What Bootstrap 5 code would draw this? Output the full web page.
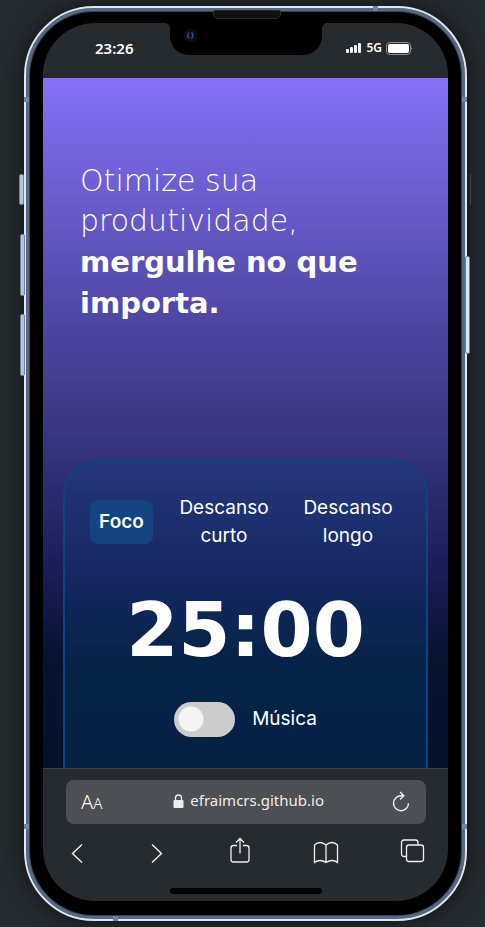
<!DOCTYPE html>
<html lang="pt-BR">
<head>
<meta charset="utf-8">
<meta name="viewport" content="width=device-width, initial-scale=1">
<title>Fokus</title>
<link href="https://cdn.jsdelivr.net/npm/bootstrap@5.3.0/dist/css/bootstrap.min.css" rel="stylesheet">
<style>
body { background: #262b2f; padding: 6px 18px 6px 24px; font-family: Inter, "Noto Sans", sans-serif; color: #fff; }
button { color: inherit; }
svg { display: block; }
.phone { min-height: calc(100vh - 12px); padding: 15px 17px 18px; background: #000; border: 2px solid #dfe6f5; border-radius: 70px;
  box-shadow: inset 0 0 0 3px #566982, inset 0 0 0 4px #33404f, 0 0 22px rgba(0,0,0,.6); }
.side-key { position: absolute; width: 5px; background: #b5c4d9; border: 1px solid #71819a; border-radius: 2px; }
.key-mute { left: -7px; top: 166px; height: 31px; }
.key-up { left: -6px; top: 226px; height: 62px; }
.key-down { left: -6px; top: 306px; height: 62px; }
.key-power { right: -5px; top: 248px; height: 98px; background: #d5e6f7; }
.key-shade { right: -6px; top: 166px; height: 31px; width: 1px; background: #3c444c; border: 0; }
.antenna { position: absolute; width: 5px; height: 5px; background: #7484a3; }
.an-lt { left: -2px; top: 89px; } .an-lb { left: -2px; bottom: 90px; }
.an-rt { right: -2px; top: 89px; } .an-rb { right: -2px; bottom: 90px; }
.an-t { right: 87px; top: -2px; } .an-b { left: 87px; bottom: -2px; }
.speaker { position: absolute; top: 2px; left: 50%; width: 68px; margin-left: -33px; height: 9px; background: #111; border: 1px solid #292929; border-radius: 2px 2px 5px 5px; }
.screen { border-radius: 52px; background: #262b2f; }
.notch { position: absolute; top: 0; left: 50%; width: 152px; margin-left: -76px; height: 32px; background: #000; border-radius: 0 0 19px 19px; }
.notch::before, .notch::after { content: ""; position: absolute; top: 0; width: 4px; height: 4px; }
.notch::before { left: -4px; background: radial-gradient(circle at 0 100%, transparent 3px, #000 4px); }
.notch::after { right: -4px; background: radial-gradient(circle at 100% 100%, transparent 3px, #000 4px); }
.lens { position: absolute; left: 13px; top: 5px; }
.status { height: 55px; padding: 0 35px 5px 52px; font-family: "Noto Sans", sans-serif; }
.clock { font-size: 15px; font-weight: 600; }
.net { font-size: 12px; font-weight: 600; line-height: 16px; }
.site { padding: 83px 20px 0; background: linear-gradient(#8771f8 0, #5048a6 34%, #37347f 53%, #191b53 73%, #04142f 85%, #03132c 100%); }
.slogan { font-family: "DejaVu Sans", sans-serif; font-size: 29px; line-height: 41px; margin: 0 17px 136px; }
.slogan span, .slogan strong { display: block; }
.slogan-thin { font-size: 30px; line-height: 40px; font-weight: 200; padding-bottom: 1px; }
.timer-card { padding: 32px 29px 30px 25px; border: 2px solid #13427c; border-bottom: 0; border-radius: 34px 34px 0 0; background: rgba(11,68,128,.3); }
.mode { background: none; border: 0; border-radius: 8px; font-size: 19px; line-height: 28px; padding: 0; width: 98px; }
.mode-on { width: 63px; height: 44px; background: #144480; font-weight: 600; }
.modes { gap: 22px; }
.countdown { font-family: "DejaVu Sans", sans-serif; font-weight: 700; font-size: 75px; line-height: 72px; margin: 44px -4px 36px 0; }
.music { gap: 17px; font-size: 19px; margin-right: -4px; }
.form-check-input.music-input { width: 61px; height: 35px; margin: 0; border: 0; border-radius: 18px; background: radial-gradient(circle 13px at 17px 17px, #f4f4f4 12px, #ccc 13px); }
.toolbar { height: 133px; padding: 11px 22px 0 23px; border-top: 1px solid #3d4144; }
.address { height: 44px; border-radius: 8px; background: #4c4f54; padding: 0 15px; font-family: "Noto Sans", sans-serif; font-size: 15px; }
.aa { font-size: 20px; font-weight: 300; line-height: 24px; } .aa span { font-size: 15px; }
.host { color: #eee; text-decoration: none; gap: 6px; padding: 0 0 3px 4px; }
.tools { padding: 13px 1px 0; }
.home-bar { width: 152px; height: 6px; border-radius: 3px; background: #000; margin: 23px auto 0; }
</style>
</head>
<body>
<main class="phone position-relative d-flex flex-column">
  <i class="side-key key-mute"></i><i class="side-key key-up"></i><i class="side-key key-down"></i><i class="side-key key-power"></i><i class="side-key key-shade"></i>
  <i class="antenna an-lt"></i><i class="antenna an-lb"></i><i class="antenna an-rt"></i><i class="antenna an-rb"></i><i class="antenna an-t"></i><i class="antenna an-b"></i>
  <i class="speaker"></i>
  <div class="screen position-relative overflow-hidden flex-grow-1 d-flex flex-column">
    <div class="notch">
      <svg class="lens" width="15" height="15" viewBox="0 0 15 15"><circle cx="7.500" cy="7.500" r="7" fill="#0c0d10"/><circle cx="7.500" cy="7.500" r="4" fill="#08111d"/><path d="M6 4.500a4 4 0 0 0 0 6" stroke="#285061" stroke-width="1.500" fill="none"/><path d="M8.500 4.500a4 4 0 0 1 0 6" stroke="#304dab" stroke-width="1.500" fill="none"/></svg>
    </div>
    <header class="status d-flex align-items-center justify-content-between">
      <span class="clock">23:26</span>
      <div class="d-flex align-items-center gap-1">
        <svg width="16" height="10" viewBox="0 0 16 10" fill="#f1f1f1"><rect x="0" y="6" width="3" height="4" rx="1"/><rect x="4" y="4" width="3" height="6" rx="1"/><rect x="8" y="2" width="3" height="8" rx="1"/><rect x="12" y="0" width="3" height="10" rx="1"/></svg>
        <span class="net">5G</span>
        <svg width="27" height="13" viewBox="0 0 27 13"><rect x=".5" y=".5" width="24" height="12" rx="3.500" fill="none" stroke="#8b8e90"/><rect x="2" y="2" width="21" height="9" rx="2" fill="#fff"/><path d="M25.500 5q1.500 1.500 0 3z" fill="#aaa"/></svg>
      </div>
    </header>
    <section class="site flex-grow-1 d-flex flex-column">
      <h1 class="slogan"><span class="slogan-thin">Otimize sua<br>produtividade,</span><strong>mergulhe no que importa.</strong></h1>
      <div class="timer-card flex-grow-1">
        <div class="modes d-flex align-items-center">
          <button class="mode mode-on flex-shrink-0" type="button">Foco</button>
          <div class="d-flex flex-grow-1 justify-content-between">
            <button class="mode" type="button">Descanso curto</button>
            <button class="mode" type="button">Descanso longo</button>
          </div>
        </div>
        <div class="countdown text-center">25:00</div>
        <div class="music d-flex align-items-center justify-content-center">
          <input class="form-check-input music-input" type="checkbox" role="switch" id="music">
          <label for="music">Música</label>
        </div>
      </div>
    </section>
    <footer class="toolbar">
      <div class="address d-flex align-items-center justify-content-between">
        <button class="aa border-0 bg-transparent p-0" type="button">A<span>A</span></button>
        <a class="host d-flex align-items-center" href="#"><svg width="11" height="14" viewBox="0 0 11 14"><path d="M2.500 7V4a3 3 0 0 1 6 0v3" fill="none" stroke="#eee" stroke-width="1.300"/><rect x=".5" y="6" width="10" height="8" rx="1" fill="#eee"/></svg>efraimcrs.github.io</a>
        <button class="border-0 bg-transparent p-0" type="button" aria-label="Recarregar"><svg width="20" height="22" viewBox="0 0 20 22" fill="none" stroke="#f1f1f1" stroke-width="1.400"><path d="M17.500 12.300a7.500 7.500 0 1 1-7.500-7.500h2.500M9 1l3.800 3.800L9 8.600"/></svg></button>
      </div>
      <nav class="tools d-flex align-items-center justify-content-between">
        <button class="border-0 bg-transparent p-0" type="button" aria-label="Voltar"><svg width="20" height="28" viewBox="0 0 20 28" fill="none" stroke="#f1f1f1" stroke-width="1.400"><path d="M15 7.500 5.500 16.500 15 25.500"/></svg></button>
        <button class="border-0 bg-transparent p-0" type="button" aria-label="Avançar"><svg width="20" height="28" viewBox="0 0 20 28" fill="none" stroke="#f1f1f1" stroke-width="1.400"><path d="m5 7.500 9.500 9L5 25.500"/></svg></button>
        <button class="border-0 bg-transparent p-0" type="button" aria-label="Compartilhar"><svg width="26" height="28" viewBox="0 0 26 28" fill="none" stroke="#f1f1f1" stroke-width="1.300"><path d="M10 8.500H6.500a2.500 2.500 0 0 0-2.500 2.500v11.500A2.500 2.500 0 0 0 6.500 25h13a2.500 2.500 0 0 0 2.500-2.500V11a2.500 2.500 0 0 0-2.500-2.500H16M13 16.500V2M9 5.500l4-4 4 4"/></svg></button>
        <button class="border-0 bg-transparent p-0" type="button" aria-label="Favoritos"><svg width="26" height="28" viewBox="0 0 26 28" fill="none" stroke="#f1f1f1" stroke-width="1.300"><path d="M13 8Q10 5.500 7 5.500T1.500 8v17.500Q4 23.500 7 23.500t6 2Q16 23.500 19 23.500t5.500 2V8Q22 5.500 19 5.500T13 8v17.500"/></svg></button>
        <button class="border-0 bg-transparent p-0" type="button" aria-label="Abas"><svg width="26" height="28" viewBox="0 0 26 28" fill="none" stroke="#f1f1f1" stroke-width="1.300"><rect x="7.500" y="8" width="17" height="16.500" rx="2.500"/><path d="M7.500 19.500H5A2.500 2.500 0 0 1 2.500 17V5.500A2.500 2.500 0 0 1 5 3h11.500A2.500 2.500 0 0 1 19 5.500V8"/></svg></button>
      </nav>
      <div class="home-bar"></div>
    </footer>
  </div>
</main>
<script src="https://cdn.jsdelivr.net/npm/bootstrap@5.3.0/dist/js/bootstrap.bundle.min.js"></script>
</body>
</html>
